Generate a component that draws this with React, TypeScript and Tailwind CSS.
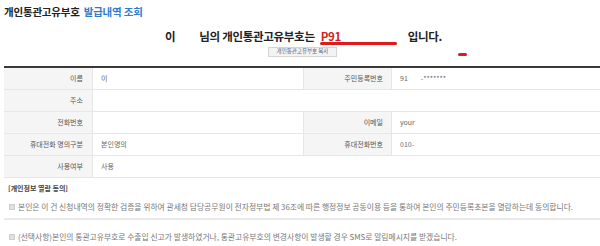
export default function App() {
  const font = { fontFamily: '"Noto Sans CJK KR", "Noto Sans", sans-serif' };
  return (
    <div style={font} className="w-[600px] h-[246px] overflow-hidden bg-white text-[#333]">
      <div className="h-[24px] flex items-center pl-[4px] text-[10.5px] font-bold tracking-[-0.2px]">
        <span className="text-[#222]">개인통관고유부호</span>
        <span className="ml-[4px] text-[#2f7bcc]">발급내역 조회</span>
      </div>

      <div className="mt-[2px] h-[21px] flex items-center pl-[165px] text-[11.5px] font-bold text-[#222] tracking-[-0.3px]">
        <span>이</span>
        <span className="ml-[24px]">님의 개인통관고유부호는</span>
        <span className="relative ml-[6px] w-[87px] text-[#d42020]">
          P91
          <span className="absolute left-[-1px] top-[14px] w-[77px] h-[3px] rounded-full bg-[#e01a1a]" />
        </span>
        <span>입니다.</span>
        <span className="relative">
          <span className="absolute left-[16px] top-[16px] w-[9px] h-[3px] rounded-full bg-[#e01a1a]" />
        </span>
      </div>

      <div className="h-[10px] flex justify-center pl-[5px]">
        <button className="h-[10px] px-[8px] flex items-center border border-[#d4d4d4] bg-[#f3f3f3] text-[5.5px] leading-none text-[#556688]">
          개인통관고유부호 복사
        </button>
      </div>

      <div className="mt-[9px] ml-[4px] border-t-2 border-[#3a3a3a] text-[7px] text-[#666]">
        <Row label="이름" value="이" label2="주민등록번호" value2={<span>91<span className="ml-[13px]">-*******</span></span>} />
        <Row label="주소" value="" />
        <Row label="전화번호" value="" label2="이메일" value2="your" />
        <Row label="휴대전화 명의구분" value="본인명의" label2="휴대전화번호" value2="010-" />
        <Row label="사용여부" value="사용" />
      </div>

      <div className="pl-[8px] mt-[2px] h-[16px] flex items-center text-[7px] font-bold text-[#444]">
        [개인정보 열람 동의]
      </div>
      <div className="mt-[2px] h-[18px] flex items-center pl-[9px] text-[7.8px] text-[#777]">
        <Check />
        <span className="ml-[3px] whitespace-nowrap">
          본인은 이 건 신청내역의 정확한 검증을 위하여 관세청 담당공무원이 전자정부법 제 36조에 따른 행정정보 공동이용 등을 통하여 본인의 주민등록초본을 열람하는데 동의합니다.
        </span>
      </div>
      <div className="mt-[2px] ml-[4px] h-[2px] bg-[#e8e8e8]" />
      <div className="mt-[8px] h-[18px] flex items-center pl-[9px] text-[7.8px] text-[#777]">
        <Check />
        <span className="ml-[3px] whitespace-nowrap">
          (선택사항)본인의 통관고유부호로 수출입 신고가 발생하였거나, 통관고유부호의 변경사항이 발생할 경우 SMS로 알림메시지를 받겠습니다.
        </span>
      </div>
    </div>
  );
}

function Check() {
  return (
    <span className="w-[6px] h-[6px] shrink-0 bg-[#dcdcdc] border border-[#cfcfcf] flex items-center justify-center">
      <svg width="5" height="5" viewBox="0 0 10 10">
        <path d="M2 5 L4 7.5 L8 2.5" fill="none" stroke="#f7f7f7" strokeWidth="1.6" />
      </svg>
    </span>
  );
}

function Row({
  label,
  value,
  label2,
  value2,
}: {
  label: string;
  value: React.ReactNode;
  label2?: string;
  value2?: React.ReactNode;
}) {
  return (
    <div className="flex h-[22px] border-b border-[#e6e6e6]">
      <div className="w-[89px] shrink-0 bg-[#f5f5f5] border-r border-[#e6e6e6] flex items-center justify-end pr-[9px] text-[#555]">
        {label}
      </div>
      {label2 ? (
        <>
          <div className="w-[210px] shrink-0 flex items-center pl-[8px]">{value}</div>
          <div className="w-[89px] shrink-0 bg-[#f5f5f5] border-x border-[#e6e6e6] flex items-center justify-end pr-[8px] text-[#555]">
            {label2}
          </div>
          <div className="flex-1 flex items-center pl-[8px]">{value2}</div>
        </>
      ) : (
        <div className="flex-1 flex items-center pl-[8px]">{value}</div>
      )}
    </div>
  );
}
